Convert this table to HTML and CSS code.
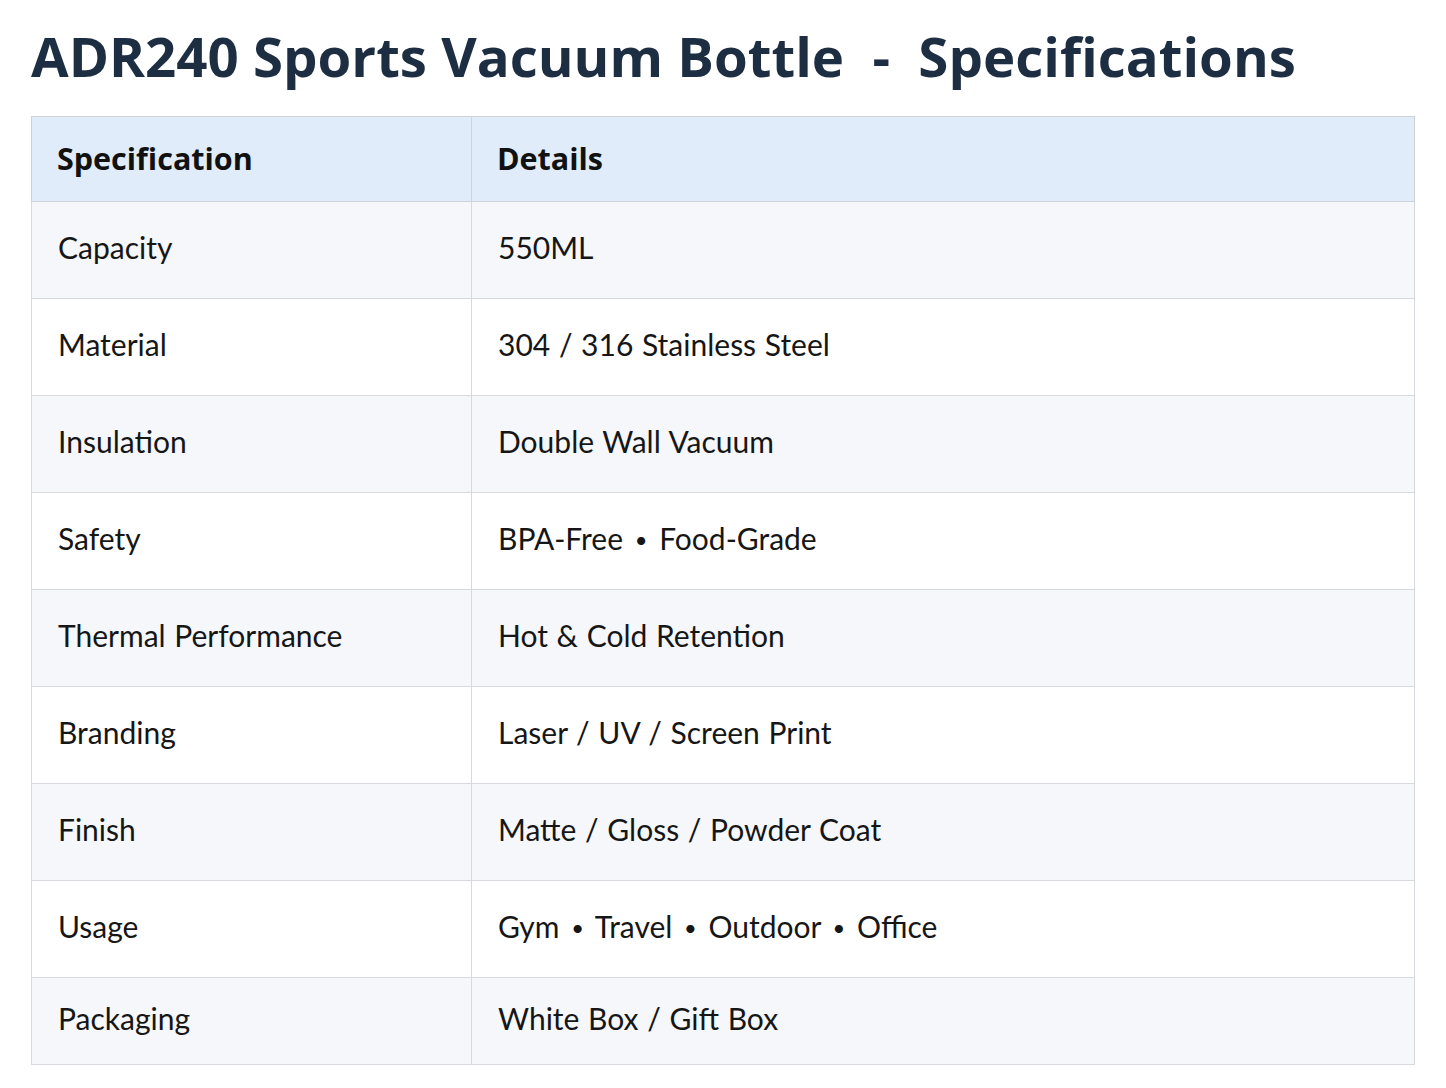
FILE: index.html
```html
<!DOCTYPE html>
<html>
<head>
<meta charset="utf-8">
<link rel="stylesheet" href="styles.css">
</head>
<body>
<h1 class="title">ADR240 Sports Vacuum Bottle &nbsp;-&nbsp; Specifications</h1>
<table class="spec">
<thead>
<tr><th class="c1">Specification</th><th>Details</th></tr>
</thead>
<tbody>
<tr class="alt"><td>Capacity</td><td>550ML</td></tr>
<tr><td>Material</td><td>304 / 316 Stainless Steel</td></tr>
<tr class="alt"><td>Insulation</td><td>Double Wall Vacuum</td></tr>
<tr><td>Safety</td><td>BPA-Free <span class="dot">•</span> Food-Grade</td></tr>
<tr class="alt"><td>Thermal Performance</td><td>Hot &amp; Cold Retention</td></tr>
<tr><td>Branding</td><td>Laser / UV / Screen Print</td></tr>
<tr class="alt"><td>Finish</td><td>Matte / Gloss / Powder Coat</td></tr>
<tr><td>Usage</td><td>Gym <span class="dot">•</span> Travel <span class="dot">•</span> Outdoor <span class="dot">•</span> Office</td></tr>
<tr class="alt last"><td>Packaging</td><td>White Box / Gift Box</td></tr>
</tbody>
</table>
</body>
</html>
```
FILE: styles.css
```css
body {
  margin: 0;
  padding: 0 31px;
  background: #ffffff;
  font-family: "Lato", "Noto Sans", sans-serif;
}
.title {
  font-family: "Open Sans", "Noto Sans", sans-serif;
  font-weight: 700;
  font-size: 54.6px;
  color: #1d2d42;
  margin: 0;
  padding: 18px 0 0 0;
  height: 116px;
  box-sizing: border-box;
  line-height: 76px;
}
.spec {
  width: 1384px;
  border-collapse: collapse;
  border: 1.5px solid #cfd3d8;
}
.spec th {
  background: #e0ecf9;
  font-family: "Open Sans", "Noto Sans", sans-serif;
  font-weight: 700;
  font-size: 30.5px;
  color: #111;
  text-align: left;
  height: 82px;
  padding: 0 0 2px 25px;
  border: 1.5px solid #cfd3d8;
}
.spec th.c1 { width: 414px; }
.spec td {
  font-size: 30px;
  color: #161616;
  height: 90px;
  padding: 0 0 6px 26px;
  border: 1.5px solid #d6d9dd;
  background: #ffffff;
  word-spacing: 1px;
}
.spec tr.alt td { background: #f5f7fb; }
.spec tr.last td { height: 80px; }
.dot {
  display: inline-block;
  font-size: 22px;
  margin: 0 3px;
  vertical-align: 2px;
}
```
